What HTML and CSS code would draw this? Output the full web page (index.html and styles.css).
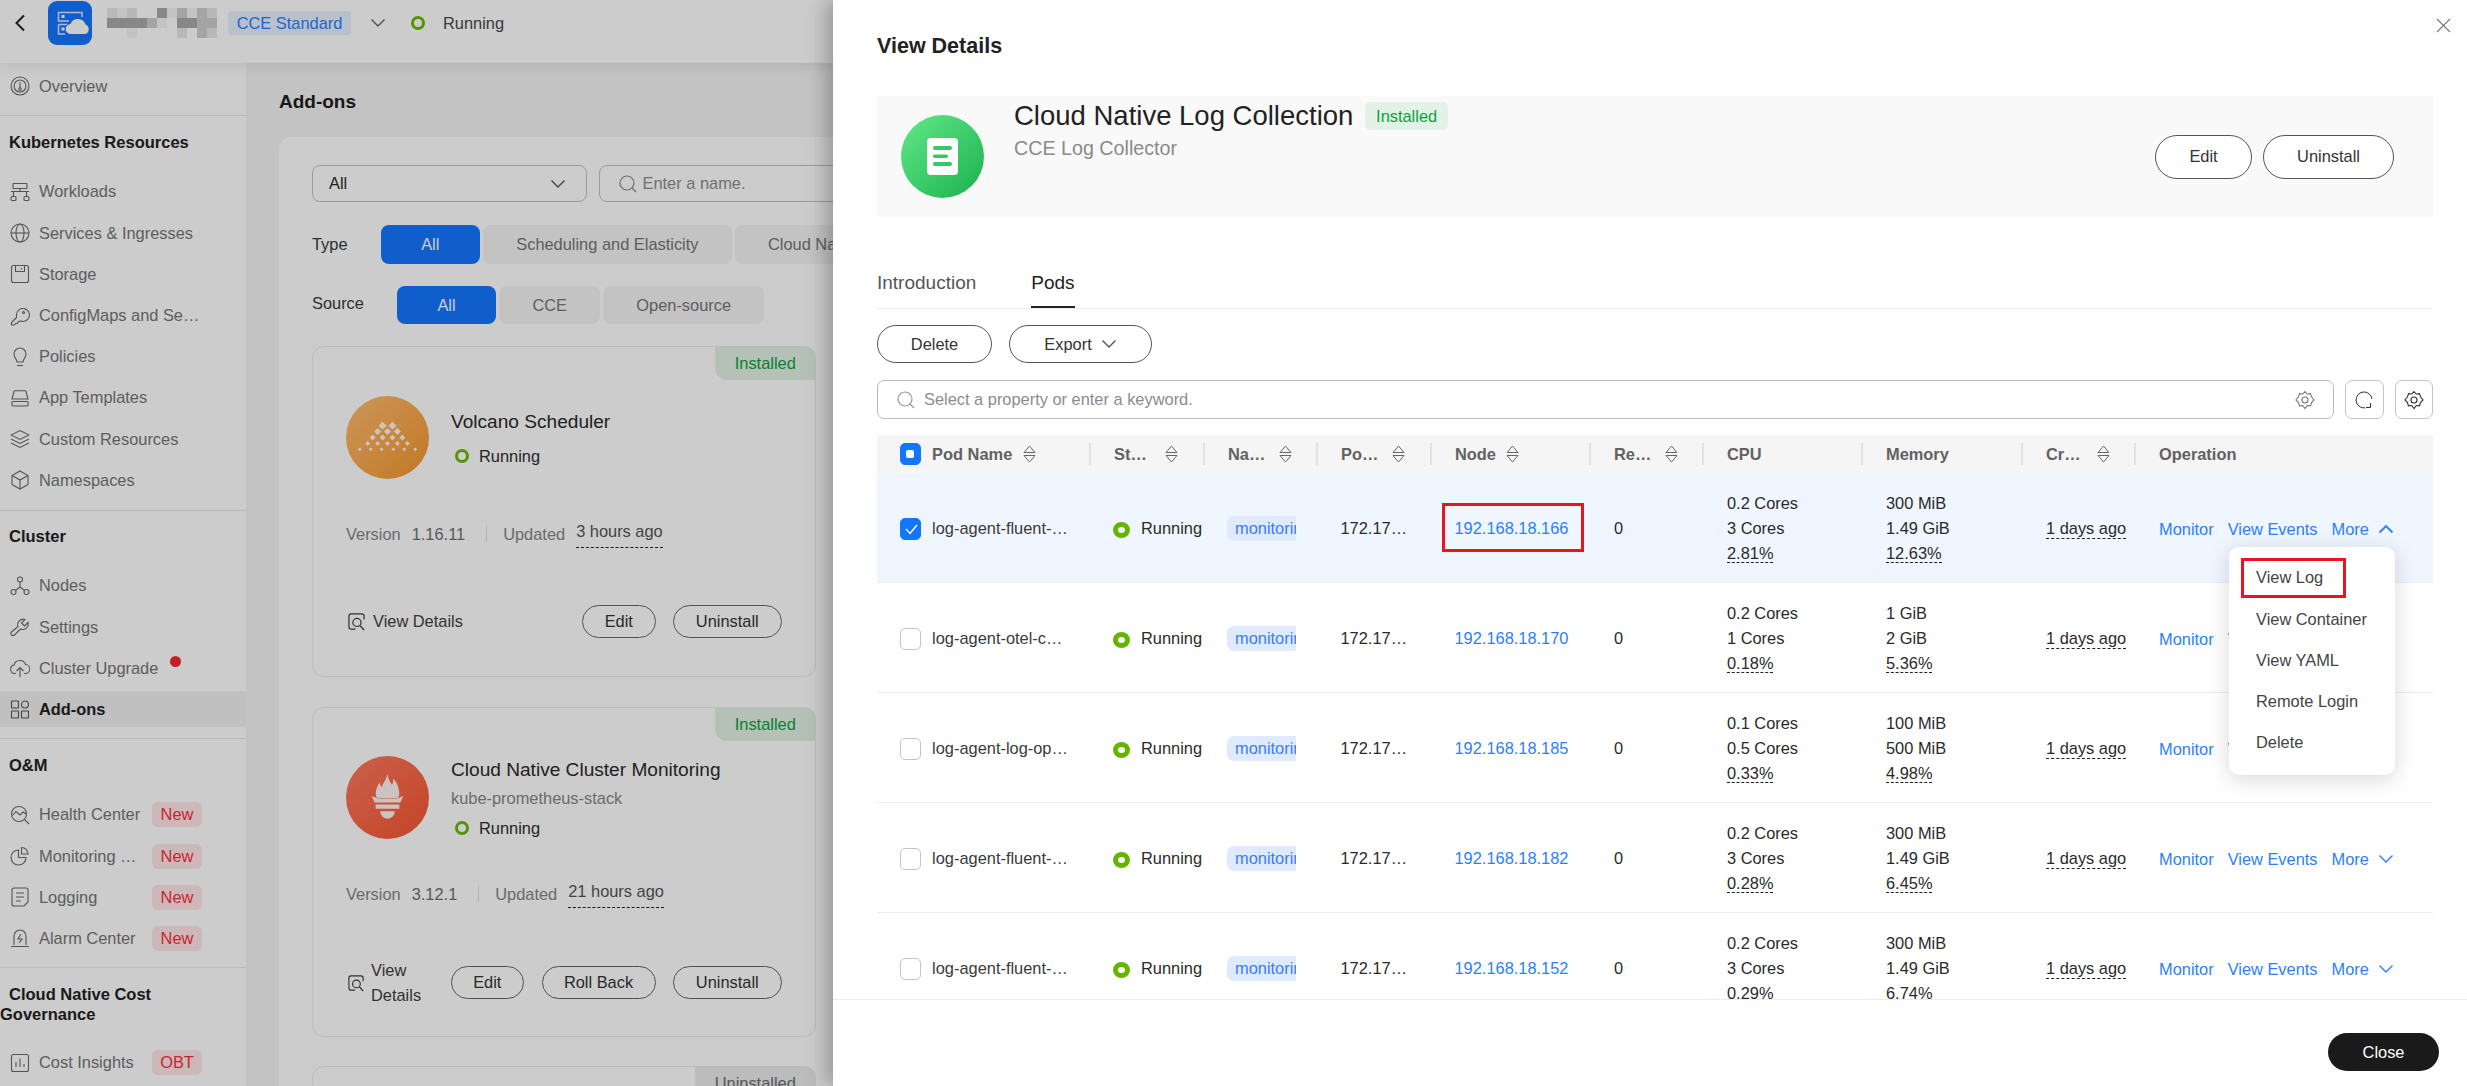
FILE: index.html
```html
<!DOCTYPE html>
<html lang="en">
<head>
<meta charset="utf-8">
<title>Add-ons</title>
<link rel="stylesheet" href="styles.css">
</head>
<body>
<svg class="defs" width="0" height="0" aria-hidden="true">
  <symbol id="i-sort" viewBox="0 0 13 18"><path d="M6.5 1 12 7.5H1ZM1 10.5H12L6.5 17Z" fill="none" stroke="#666" stroke-width="1"/></symbol>
  <symbol id="i-down" viewBox="0 0 16 10"><path d="M1.5 1.5 8 8l6.5-6.5" fill="none" stroke="currentColor" stroke-width="1.4"/></symbol>
  <symbol id="i-up" viewBox="0 0 16 10"><path d="M1.5 8.5 8 2l6.5 6.5" fill="none" stroke="currentColor" stroke-width="1.8"/></symbol>
  <symbol id="i-search" viewBox="0 0 18 18"><circle cx="8" cy="8" r="7" fill="none" stroke="currentColor" stroke-width="1.2"/><path d="m13 13 4 4" stroke="currentColor" stroke-width="1.2"/></symbol>
  <symbol id="i-gear" viewBox="0 0 20 20"><path d="M10 1.5 12.2 4l3.3-.4 1 3.2L19 9.9l-2.5 2.7-.9 3.3-3.3-.4L10 18.5l-2.3-3-3.3.4-.9-3.3L1 9.900l2.500-3.100 1-3.200 3.300.4Z" fill="none" stroke="currentColor" stroke-width="1.1"/><circle cx="10" cy="10" r="3" fill="none" stroke="currentColor" stroke-width="1.1"/></symbol>
  <symbol id="i-view" viewBox="0 0 18 20"><path d="M8 18H3.500A2.500 2.500 0 0 1 1 15.500v-11A2.500 2.500 0 0 1 3.500 2h11A2.500 2.500 0 0 1 17 4.500V8" fill="none" stroke="currentColor" stroke-width="1.3"/><circle cx="9.500" cy="11" r="4.300" fill="none" stroke="currentColor" stroke-width="1.3"/><path d="m13 14.500 4 4.500" stroke="currentColor" stroke-width="1.3"/></symbol>
</svg>

<div class="page">
  <header class="topbar">
    <svg class="back" viewBox="0 0 12 18" width="12" height="18"><path d="M10 1.500 2.500 9l7.500 7.500" fill="none" stroke="#222" stroke-width="2"/></svg>
    <div class="logo">
      <svg viewBox="0 0 44 44" width="44" height="44"><path d="M34 16v-4.500H10.500V20H21M10.500 23.500H19M10.500 23.500V33H17" fill="none" stroke="#fff" stroke-width="1.500" opacity=".85"/><rect x="13.500" y="14" width="3" height="3" fill="#fff"/><rect x="13.500" y="26.500" width="3" height="3" fill="#fff"/><path d="M23 33a5 5 0 0 1-.5-10 8 8 0 0 1 15 .5A5 5 0 0 1 37 33Z" fill="#fff"/></svg>
    </div>
    <div class="mosaic" aria-hidden="true">
      <i class="s3"></i><i class="s4"></i><i class="s3"></i><i></i><i></i><i class="s1"></i><i class="s4"></i><i class="s2"></i><i class="s4"></i><i class="s2"></i><i class="s3"></i>
      <i class="s1"></i><i class="s1"></i><i class="s1"></i><i class="s1"></i><i class="s2"></i><i class="s4"></i><i></i><i class="s1"></i><i class="s1"></i><i class="s2"></i><i class="s2"></i>
      <i></i><i></i><i class="s4"></i><i></i><i></i><i></i><i></i><i class="s3"></i><i></i><i class="s2"></i><i class="s3"></i>
    </div>
    <span class="cluster-tag">CCE Standard</span>
    <svg class="top-chev" width="16" height="10"><use href="#i-down"/></svg>
    <span class="ring ring-sm"></span>
    <span class="top-status">Running</span>
  </header>

  <div class="shell">
    <nav class="sidebar">
      <div class="group g-overview">
        <a class="item"><svg class="ico" viewBox="0 0 20 20"><circle cx="10" cy="10" r="9"/><circle cx="10" cy="10" r="6"/><path d="M10 6v6"/><circle cx="10" cy="13" r="1.300"/></svg><span>Overview</span></a>
      </div>
      <div class="group g-k8s">
        <h3 class="sect">Kubernetes Resources</h3>
        <a class="item"><svg class="ico" viewBox="0 0 20 20"><rect x="3" y="1.500" width="14" height="5" rx=".5"/><path d="M1 9.500h18M10 6.500v3M3.500 9.500v5M16.500 9.500v5"/><rect x="1" y="14.500" width="5" height="4" rx="1"/><rect x="14" y="14.500" width="5" height="4" rx="1"/></svg><span>Workloads</span></a>
        <a class="item"><svg class="ico" viewBox="0 0 20 20"><circle cx="10" cy="10" r="9"/><ellipse cx="10" cy="10" rx="4" ry="9"/><path d="M1 10h18"/></svg><span>Services &amp; Ingresses</span></a>
        <a class="item"><svg class="ico" viewBox="0 0 20 20"><rect x="1.500" y="1.500" width="17" height="17" rx="2"/><path d="M5.500 1.500v6h9v-6M11.500 4v1.500"/></svg><span>Storage</span></a>
        <a class="item"><svg class="ico" viewBox="0 0 20 20"><path d="M6.500 11.500 1.500 16.500v2.500h3l1-1.500h2l1-2 2-.5A6.500 6.500 0 1 0 6.500 8Z"/><circle cx="13.500" cy="6.500" r="1"/></svg><span>ConfigMaps and Se…</span></a>
        <a class="item"><svg class="ico" viewBox="0 0 20 20"><path d="M7 15c0-3-3-4-3-8a6 6 0 0 1 12 0c0 4-3 5-3 8Z"/><path d="M7 18.500h6"/></svg><span>Policies</span></a>
        <a class="item"><svg class="ico" viewBox="0 0 20 20"><path d="M2 11 4 3.500a1 1 0 0 1 1-.8h10a1 1 0 0 1 1 .8L18 11Z"/><rect x="2" y="13.500" width="16" height="4.500" rx="1"/></svg><span>App Templates</span></a>
        <a class="item"><svg class="ico" viewBox="0 0 20 20"><path d="m10 1.500 9 4.500-9 4.500L1 6ZM1 10l9 4.500 9-4.500M1 14l9 4.500 9-4.500"/></svg><span>Custom Resources</span></a>
        <a class="item"><svg class="ico" viewBox="0 0 20 20"><path d="m10 1 8 4.500v9L10 19l-8-4.500v-9ZM2 5.500l8 4.500 8-4.500M10 10v9"/></svg><span>Namespaces</span></a>
      </div>
      <div class="group g-cluster">
        <h3 class="sect">Cluster</h3>
        <a class="item"><svg class="ico" viewBox="0 0 20 20"><circle cx="10" cy="3.500" r="2.500"/><circle cx="3.500" cy="16" r="2.500"/><circle cx="16.500" cy="16" r="2.500"/><path d="M10 6v5l-4.500 3.500M10 11l4.500 3.500"/></svg><span>Nodes</span></a>
        <a class="item"><svg class="ico" viewBox="0 0 20 20"><path d="M18 5.500 14.500 9 11.500 6l3.500-3.500a5.500 5.500 0 0 0-7 7L1.500 15a2 2 0 0 0 3 3l6-6a5.500 5.500 0 0 0 7.500-6.500Z"/></svg><span>Settings</span></a>
        <a class="item item-dot"><svg class="ico" viewBox="0 0 20 20"><path d="M6 15.500H5A4.300 4.300 0 0 1 4 7a6 6 0 0 1 11.500-.5A4.500 4.500 0 0 1 15 15.500h-1M10 19v-9M6.500 13 10 9.500l3.500 3.500"/></svg><span>Cluster Upgrade</span><i class="red-dot"></i></a>
        <a class="item active"><svg class="ico" viewBox="0 0 20 20"><rect x="1.500" y="2" width="7" height="7" rx=".5"/><circle cx="15" cy="5.500" r="3.500"/><rect x="1.500" y="12" width="7" height="7" rx=".5"/><rect x="11.500" y="12" width="7" height="7" rx=".5"/></svg><span>Add-ons</span></a>
      </div>
      <div class="group g-om">
        <h3 class="sect">O&amp;M</h3>
        <a class="item"><svg class="ico" viewBox="0 0 20 20"><circle cx="9" cy="9" r="7.500"/><path d="m14.500 14.500 4.500 4.500M2.500 10.500 6 6.500l4 3.500 3-3 3 2"/></svg><span class="lab">Health Center</span><b class="new">New</b></a>
        <a class="item"><svg class="ico" viewBox="0 0 20 20"><path d="M8.500 4a7.500 7.500 0 1 0 7.500 7.500H8.500Z"/><path d="M11.500 1.500v6.500H18a6.500 6.500 0 0 0-6.500-6.500Z"/></svg><span class="lab">Monitoring …</span><b class="new">New</b></a>
        <a class="item"><svg class="ico" viewBox="0 0 20 20"><path d="M14 19H4a2 2 0 0 1-2-2V3a2 2 0 0 1 2-2h12a2 2 0 0 1 2 2v12ZM6 6h8M6 10h8M6 14h5"/></svg><span class="lab">Logging</span><b class="new">New</b></a>
        <a class="item"><svg class="ico" viewBox="0 0 20 20"><path d="M4 17V8a6 6 0 0 1 12 0v9M1 18.500h18M11 6 8 11h4l-3 4"/></svg><span class="lab">Alarm Center</span><b class="new">New</b></a>
      </div>
      <div class="group g-cost">
        <h3 class="sect sect-wrap">Cloud Native Cost Governance</h3>
        <a class="item"><svg class="ico" viewBox="0 0 20 20"><rect x="1.500" y="1.500" width="17" height="17" rx="2"/><path d="M6 14V9M10 14V5.500M14 14v-3"/></svg><span class="lab">Cost Insights</span><b class="new">OBT</b></a>
      </div>
    </nav>

    <main class="main">
      <h1 class="title">Add-ons</h1>
      <section class="panel">
        <div class="filters">
          <div class="select"><span>All</span><svg width="16" height="10"><use href="#i-down"/></svg></div>
          <div class="namebox"><svg width="18" height="18"><use href="#i-search"/></svg><span>Enter a name.</span></div>
        </div>
        <div class="pillrow">
          <span class="pill-label w-type">Type</span>
          <span class="pill on p-all">All</span>
          <span class="pill p-sched">Scheduling and Elasticity</span>
          <span class="pill p-cloud">Cloud Native Observability</span>
        </div>
        <div class="pillrow row-source">
          <span class="pill-label w-source">Source</span>
          <span class="pill on p-all">All</span>
          <span class="pill p-cce">CCE</span>
          <span class="pill p-open">Open-source</span>
        </div>

        <article class="addon">
          <span class="corner">Installed</span>
          <div class="addon-head">
            <div class="round volcano">
              <svg viewBox="-42 -42 84 84" width="83" height="83"><path fill="#fff" opacity=".9" d="M-5-16l4 4-4 4-4-4zM5-16l4 4-4 4-4-4zM-10-9.500l3.500 3.500-3.500 3.500-3.500-3.500zM0-9.500l3.500 3.500-3.500 3.500-3.500-3.500zM10-9.500l3.500 3.500-3.500 3.500-3.500-3.500zM-15-3l3 3-3 3-3-3zM-5-3l3 3-3 3-3-3zM5-3l3 3-3 3-3-3zM15-3l3 3-3 3-3-3zM-20 3.500l2.500 2.500-2.500 2.500-2.500-2.500zM-10 3.500l2.500 2.500-2.500 2.500-2.500-2.500zM0 3.500l2.500 2.500-2.500 2.500-2.500-2.500zM10 3.500l2.500 2.500-2.500 2.500-2.500-2.500zM20 3.500l2.500 2.500-2.500 2.500-2.500-2.500zM-28 10l2 2-2 2-2-2zM-17 10l2 2-2 2-2-2zM-6 10l2 2-2 2-2-2zM6 10l2 2-2 2-2-2zM17 10l2 2-2 2-2-2zM28 10l2 2-2 2-2-2z"/></svg>
            </div>
            <div class="addon-info">
              <div class="addon-name">Volcano Scheduler</div>
              <div class="addon-status st-gap"><span class="ring ring-sm"></span>Running</div>
            </div>
          </div>
          <div class="meta"><span class="k">Version</span><span class="v">1.16.11</span><i class="vsep"></i><span class="k">Updated</span><span class="time">3 hours ago</span></div>
          <div class="actions">
            <a class="details"><svg width="17" height="19"><use href="#i-view"/></svg>View Details</a>
            <div class="btns"><button class="btn b-edit">Edit</button><button class="btn b-uninstall">Uninstall</button></div>
          </div>
        </article>

        <article class="addon addon-two">
          <span class="corner">Installed</span>
          <div class="addon-head">
            <div class="round flame">
              <svg viewBox="-42 -42 84 84" width="83" height="83"><path fill="#fff" opacity=".92" d="M0-24c1 6 2 7 4.500 11 1.500-2 1.500-4 1-6.500 4 4 5.500 8 6 12.500 1 4 0 6-1 7.500H-10.500c-1-1.500-2-3.500-1-7.500.5-3 1.500-5.500 4-8.500 0 2.500.5 4 1.500 5 1.500-4 5-8 6-13.500ZM-16-1.500-9.500 1h19L16-1.500 13 5H-13ZM-12 7H12V11.500H-12ZM-7.500 14H7.500C7 19 3.500 21.500 0 21.500S-7 19-7.500 14Z"/></svg>
            </div>
            <div class="addon-info">
              <div class="addon-name">Cloud Native Cluster Monitoring</div>
              <div class="addon-sub">kube-prometheus-stack</div>
              <div class="addon-status"><span class="ring ring-sm"></span>Running</div>
            </div>
          </div>
          <div class="meta"><span class="k">Version</span><span class="v">3.12.1</span><i class="vsep"></i><span class="k">Updated</span><span class="time">21 hours ago</span></div>
          <div class="actions">
            <a class="details details-wrap"><svg width="16" height="18"><use href="#i-view"/></svg><span>View<br>Details</span></a>
            <div class="btns"><button class="btn b-edit">Edit</button><button class="btn b-roll">Roll Back</button><button class="btn b-uninstall">Uninstall</button></div>
          </div>
        </article>

        <article class="addon addon-three">
          <span class="corner corner-grey">Uninstalled</span>
        </article>
      </section>
    </main>
  </div>

  <div class="mask"></div>

  <aside class="drawer">
    <svg class="close-x" viewBox="0 0 15 15" width="15" height="15"><path d="M1 1l13 13M14 1 1 14" stroke="#777" stroke-width="1.100"/></svg>
    <div class="drawer-body">
      <h2 class="drawer-title">View Details</h2>
      <div class="hero">
        <div class="round logcol">
          <svg viewBox="0 0 83 83" width="83" height="83"><rect x="26" y="23" width="31" height="37" rx="4" fill="#fff"/><g fill="#34c964"><rect x="32" y="31" width="19" height="4" rx="2"/><rect x="32" y="39.500" width="15" height="3.500" rx="1.700"/><rect x="32" y="47" width="19" height="4" rx="2"/></g></svg>
        </div>
        <div class="hero-text">
          <div class="hero-name"><span>Cloud Native Log Collection</span><em class="badge">Installed</em></div>
          <div class="hero-sub">CCE Log Collector</div>
        </div>
        <div class="hero-btns"><button class="hbtn h-edit">Edit</button><button class="hbtn h-un">Uninstall</button></div>
      </div>

      <div class="tabs"><span class="tab">Introduction</span><span class="tab tab-on">Pods</span></div>

      <div class="toolbar">
        <button class="tbtn t-del">Delete</button>
        <button class="tbtn t-exp">Export<svg width="16" height="10"><use href="#i-down"/></svg></button>
      </div>

      <div class="searchrow">
        <div class="searchbox">
          <svg class="s-ico" width="18" height="18"><use href="#i-search"/></svg>
          <span class="ph">Select a property or enter a keyword.</span>
          <svg class="s-gear" width="20" height="20"><use href="#i-gear"/></svg>
        </div>
        <button class="sqbtn"><svg viewBox="0 0 20 20" width="20" height="20"><path d="M18 9A8 8 0 1 0 11 17.900" fill="none" stroke="#333" stroke-width="1"/><path d="M16.500 13v4.500H12" fill="none" stroke="#333" stroke-width="1"/></svg></button>
        <button class="sqbtn"><svg width="20" height="20" class="sq-gear"><use href="#i-gear"/></svg></button>
      </div>

      <div class="table">
        <div class="tr thead">
          <div class="th th-first"><span class="cb cb-part"></span><span class="lab lab-wide">Pod Name</span><svg width="13" height="18"><use href="#i-sort"/></svg></div>
          <div class="th"><span class="lab">St…</span><svg width="13" height="18"><use href="#i-sort"/></svg></div>
          <div class="th"><span class="lab">Na…</span><svg width="13" height="18"><use href="#i-sort"/></svg></div>
          <div class="th"><span class="lab">Po…</span><svg width="13" height="18"><use href="#i-sort"/></svg></div>
          <div class="th"><span class="lab">Node</span><svg width="13" height="18"><use href="#i-sort"/></svg></div>
          <div class="th"><span class="lab">Re…</span><svg width="13" height="18"><use href="#i-sort"/></svg></div>
          <div class="th"><span>CPU</span></div>
          <div class="th"><span>Memory</span></div>
          <div class="th"><span class="lab">Cr…</span><svg width="13" height="18"><use href="#i-sort"/></svg></div>
          <div class="th th-last"><span>Operation</span></div>
        </div>

        <div class="tr row row-sel">
          <div class="td td-first"><span class="cb cb-on"><svg viewBox="0 0 22 22" width="22" height="22"><path d="m6 11 4 4.500 7-8.500" fill="none" stroke="#fff" stroke-width="1.400"/></svg></span>log-agent-fluent-…</div>
          <div class="td td-st"><span class="ring"></span>Running</div>
          <div class="td td-ns"><span class="ns">monitoring</span></div>
          <div class="td td-ip">172.17…</div>
          <div class="td td-ip"><a class="lnk">192.168.18.166</a></div>
          <div class="td">0</div>
          <div class="td stack"><span>0.2 Cores</span><span>3 Cores</span><span><u>2.81%</u></span></div>
          <div class="td stack"><span>300 MiB</span><span>1.49 GiB</span><span><u>12.63%</u></span></div>
          <div class="td"><u>1 days ago</u></div>
          <div class="td ops"><a class="lnk">Monitor</a><a class="lnk">View Events</a><a class="lnk">More</a><svg class="chev" width="16" height="10"><use href="#i-up"/></svg></div>
        </div>

        <div class="tr row">
          <div class="td td-first"><span class="cb"></span>log-agent-otel-c…</div>
          <div class="td td-st"><span class="ring"></span>Running</div>
          <div class="td td-ns"><span class="ns">monitoring</span></div>
          <div class="td td-ip">172.17…</div>
          <div class="td td-ip"><a class="lnk">192.168.18.170</a></div>
          <div class="td">0</div>
          <div class="td stack"><span>0.2 Cores</span><span>1 Cores</span><span><u>0.18%</u></span></div>
          <div class="td stack"><span>1 GiB</span><span>2 GiB</span><span><u>5.36%</u></span></div>
          <div class="td"><u>1 days ago</u></div>
          <div class="td ops"><a class="lnk">Monitor</a><a class="lnk">View Events</a><a class="lnk">More</a><svg class="chev" width="16" height="10"><use href="#i-down"/></svg></div>
        </div>

        <div class="tr row">
          <div class="td td-first"><span class="cb"></span>log-agent-log-op…</div>
          <div class="td td-st"><span class="ring"></span>Running</div>
          <div class="td td-ns"><span class="ns">monitoring</span></div>
          <div class="td td-ip">172.17…</div>
          <div class="td td-ip"><a class="lnk">192.168.18.185</a></div>
          <div class="td">0</div>
          <div class="td stack"><span>0.1 Cores</span><span>0.5 Cores</span><span><u>0.33%</u></span></div>
          <div class="td stack"><span>100 MiB</span><span>500 MiB</span><span><u>4.98%</u></span></div>
          <div class="td"><u>1 days ago</u></div>
          <div class="td ops"><a class="lnk">Monitor</a><a class="lnk">View Events</a><a class="lnk">More</a><svg class="chev" width="16" height="10"><use href="#i-down"/></svg></div>
        </div>

        <div class="tr row">
          <div class="td td-first"><span class="cb"></span>log-agent-fluent-…</div>
          <div class="td td-st"><span class="ring"></span>Running</div>
          <div class="td td-ns"><span class="ns">monitoring</span></div>
          <div class="td td-ip">172.17…</div>
          <div class="td td-ip"><a class="lnk">192.168.18.182</a></div>
          <div class="td">0</div>
          <div class="td stack"><span>0.2 Cores</span><span>3 Cores</span><span><u>0.28%</u></span></div>
          <div class="td stack"><span>300 MiB</span><span>1.49 GiB</span><span><u>6.45%</u></span></div>
          <div class="td"><u>1 days ago</u></div>
          <div class="td ops"><a class="lnk">Monitor</a><a class="lnk">View Events</a><a class="lnk">More</a><svg class="chev" width="16" height="10"><use href="#i-down"/></svg></div>
        </div>

        <div class="tr row">
          <div class="td td-first"><span class="cb"></span>log-agent-fluent-…</div>
          <div class="td td-st"><span class="ring"></span>Running</div>
          <div class="td td-ns"><span class="ns">monitoring</span></div>
          <div class="td td-ip">172.17…</div>
          <div class="td td-ip"><a class="lnk">192.168.18.152</a></div>
          <div class="td">0</div>
          <div class="td stack"><span>0.2 Cores</span><span>3 Cores</span><span><u>0.29%</u></span></div>
          <div class="td stack"><span>300 MiB</span><span>1.49 GiB</span><span><u>6.74%</u></span></div>
          <div class="td"><u>1 days ago</u></div>
          <div class="td ops"><a class="lnk">Monitor</a><a class="lnk">View Events</a><a class="lnk">More</a><svg class="chev" width="16" height="10"><use href="#i-down"/></svg></div>
        </div>
      </div>
    </div>
    <footer class="drawer-foot"><button class="close-btn">Close</button></footer>

    <div class="mark mark-node"></div>
    <div class="menu">
      <span class="mark mark-log"></span>
      <a>View Log</a><a>View Container</a><a>View YAML</a><a>Remote Login</a><a>Delete</a>
    </div>
  </aside>
</div>
</body>
</html>
```
FILE: styles.css
```css
* { box-sizing: border-box; }
html, body { margin: 0; padding: 0; width: 2467px; height: 1086px; overflow: hidden; }
body { font-family: "Liberation Sans", Arial, sans-serif; font-size: 16.4px; color: #222; background: #fff; }
.defs { position: absolute; }
a { text-decoration: none; }
button { font: inherit; background: #fff; cursor: pointer; padding: 0; }
em { font-style: normal; }

.page { position: relative; width: 2467px; height: 1086px; overflow: hidden; display: flex; flex-direction: column; }

/* Top bar */
.topbar { position: relative; z-index: 2; height: 63px; flex: none; background: #fff; box-shadow: 0 2px 14px rgba(0,0,0,.1); display: flex; align-items: center; padding: 0 0 17px 14px; }
.back { flex: none; }
.logo { width: 44px; height: 44px; margin-left: 22px; border-radius: 9px; background: #1376ff; flex: none; }
.logo svg { display: block; }
.mosaic { display: grid; grid-template-columns: repeat(11, 10px); grid-template-rows: repeat(3, 10px); margin-left: 15px; flex: none; }
.mosaic .s1 { background: #aaa; }
.mosaic .s2 { background: #cdcdcd; }
.mosaic .s3 { background: #e6e6e6; }
.mosaic .s4 { background: #f4f4f4; }
.cluster-tag { margin-left: 11px; width: 123px; height: 24px; line-height: 24px; text-align: center; border-radius: 4px; background: #e7f0ff; color: #2780ff; white-space: nowrap; }
.top-chev { margin-left: 19px; color: #666; flex: none; }
.ring { display: inline-block; width: 17px; height: 16px; border: 5px solid #66b300; border-radius: 50%; flex: none; }
.ring-sm { width: 14px; height: 14px; border-width: 3.5px; border-color: #6cb800; }
.topbar .ring-sm { margin-left: 25px; }
.top-status { margin-left: 18px; color: #4a4a4a; }

/* Shell */
.shell { flex: 1; display: flex; min-height: 0; }

/* Sidebar */
.sidebar { width: 246px; flex: none; background: #fff; overflow: hidden; position: relative; z-index: 1; }
.group { border-bottom: 1px solid #e9e9e9; }
.g-overview { padding-top: 5px; padding-bottom: 5.8px; }
.g-k8s { padding-top: 16px; padding-bottom: 6.4px; }
.g-k8s .sect { margin-bottom: 22px; }
.g-cluster { padding-top: 15px; padding-bottom: 5.2px; }
.g-cluster .sect { margin-bottom: 22px; }
.g-om { padding-top: 16px; padding-bottom: 5.2px; }
.g-om .sect { margin-bottom: 22px; }
.g-cost { padding-top: 16px; border-bottom: 0; }
.g-cost .sect { margin-bottom: 21px; }
.sect { margin: 0; padding-left: 9px; font-size: 16.5px; line-height: 20px; font-weight: 700; color: #222; }
.sect-wrap { padding-left: 0; text-indent: 9px; width: 190px; }
.item { position: relative; height: 36px; margin-bottom: 5.2px; padding-left: 10px; display: flex; align-items: center; color: #757575; white-space: nowrap; }
.ico { width: 20px; height: 20px; flex: none; margin-right: 9px; fill: none; stroke: #6a6a6a; stroke-width: 1.1; }
.item.active { background: #f0f0f0; color: #222; font-weight: 700; }
.item.active .ico { stroke: #555; }
.lab { display: block; }
.item .lab { width: 113px; flex: none; }
.new { width: 50px; height: 25px; line-height: 25px; text-align: center; font-weight: 400; color: #fb2f3c; background: #ffe5e8; border-radius: 6px; flex: none; }
.red-dot { position: absolute; left: 170px; top: 6px; width: 11px; height: 11px; border-radius: 50%; background: #fb2730; }

/* Main */
.main { flex: 1; min-width: 0; background: #f4f4f4; padding: 29px 0 0 33px; overflow: hidden; }
.title { margin: 0 0 25px; font-size: 19px; line-height: 20px; font-weight: 700; color: #1d1d1d; }
.panel { width: 800px; height: 1100px; background: #fff; border-radius: 12px; padding: 28px 0 0 33px; }
.filters { display: flex; gap: 12px; height: 37px; }
.select { width: 274.5px; border: 1px solid #c4c4c4; border-radius: 8px; display: flex; align-items: center; justify-content: space-between; padding: 0 20px 0 16px; color: #2a2a2a; }
.select svg { color: #555; }
.namebox { width: 400px; border: 1px solid #c4c4c4; border-radius: 8px; display: flex; align-items: center; gap: 6px; padding-left: 19px; color: #8c8c8c; }
.pillrow { display: flex; align-items: center; gap: 3.4px; height: 38.5px; margin-top: 23px; }
.row-source { height: 38px; margin-top: 22.5px; }
.pill-label { color: #3a3a3a; flex: none; }
.w-type { width: 65.4px; }
.w-source { width: 81.6px; padding-bottom: 3px; }
.pill { height: 100%; display: flex; align-items: center; justify-content: center; border-radius: 8px; background: #f4f4f4; color: #757575; white-space: nowrap; flex: none; }
.pill.on { background: #1376ff; color: #fff; }
.p-all { width: 99px; }
.p-sched { width: 248.4px; }
.p-cloud { width: 300px; justify-content: flex-start; padding-left: 33px; }
.p-cce { width: 100.7px; }
.p-open { width: 160.5px; }

.addon { position: relative; width: 503.5px; height: 331px; margin-top: 22px; margin-bottom: 30px; border: 1px solid #ebebeb; border-radius: 12px; padding: 49px 33px 0; }
.addon-two { height: 330px; margin-top: 0; margin-bottom: 29px; padding-top: 46.5px; }
.addon-three { margin-top: 0; }
.corner { position: absolute; top: -1px; right: -1px; width: 100.5px; height: 34px; line-height: 34px; text-align: center; background: #e3f2e5; color: #0ca040; border-radius: 0 12px 0 12px; }
.corner-grey { width: 120.5px; background: #ececec; color: #6b6b6b; }
.addon-head { display: flex; align-items: center; gap: 22px; }
.addon-info { padding-top: 2px; }
.addon-two .addon-info { padding-top: 3px; }
.round { width: 83px; height: 83px; border-radius: 50%; flex: none; }
.round svg { display: block; }
.volcano { background: linear-gradient(135deg, #ffbd72, #f5962c); }
.flame { background: linear-gradient(135deg, #ff7a5f, #f45530); }
.logcol { background: linear-gradient(135deg, #63e88a, #1ab24d); }
.addon-name { font-size: 19.1px; line-height: 24px; color: #2a2a2a; white-space: nowrap; }
.addon-sub { margin-top: 4px; line-height: 24px; color: #868686; white-space: nowrap; }
.addon-status { margin-top: 6px; line-height: 24px; color: #2e2e2e; display: flex; align-items: center; gap: 10.5px; padding-left: 3.5px; }
.st-gap { margin-top: 10px; }
.meta { margin-top: 45px; height: 20px; line-height: 20px; display: flex; align-items: center; white-space: nowrap; color: #858585; }
.addon-two .meta { margin-top: 44.5px; }
.meta .k { margin-right: 11px; }
.meta .v { color: #6f6f6f; }
.vsep { width: 1px; height: 16px; background: #dedede; margin: 0 16px 0 21px; }
.time { color: #555; border-bottom: 1px dashed #222; padding-bottom: 6px; }
.actions { margin-top: 61px; height: 33px; display: flex; align-items: center; }
.addon-two .actions { margin-top: 62px; }
.details { display: flex; align-items: center; gap: 8px; padding-left: 2px; color: #404040; white-space: nowrap; }
.details svg { color: #3d3d3d; flex: none; }
.details-wrap { line-height: 25px; gap: 7px; }
.btns { margin-left: auto; display: flex; gap: 17.5px; }
.btn { height: 33px; border: 1px solid #666; border-radius: 17px; color: #333; }
.b-edit { width: 73.5px; }
.b-uninstall { width: 108.5px; }
.b-roll { width: 114px; }

/* Mask + drawer overlay */
.mask { position: absolute; inset: 0; background: rgba(0,0,0,.2); z-index: 10; }
.drawer { position: absolute; z-index: 11; left: 833px; top: 0; width: 1634px; height: 1086px; background: #fff; box-shadow: -6px 0 20px rgba(0,0,0,.28); display: flex; flex-direction: column; }
.close-x { position: absolute; top: 18px; right: 16px; }
.drawer-body { flex: 1; min-height: 0; overflow: hidden; padding: 34px 34px 0 44px; }
.drawer-title { margin: 0 0 38px; font-size: 21.5px; line-height: 24px; font-weight: 700; color: #222; }
.hero { height: 121px; background: #f9f9f9; display: flex; align-items: center; padding: 0 39px 0 24px; }
.hero-text { align-self: flex-start; margin-left: 30px; padding-top: 4px; }
.hero-name { display: flex; align-items: center; height: 32px; font-size: 27.5px; color: #222; white-space: nowrap; }
.badge { margin-left: 11.5px; width: 83.5px; height: 28px; line-height: 28px; text-align: center; font-size: 16.4px; background: #e3f2e6; color: #0ca040; border-radius: 5px; }
.hero-sub { margin-top: 4px; line-height: 24px; font-size: 19.7px; color: #8a8a8a; white-space: nowrap; }
.hero-btns { margin-left: auto; display: flex; gap: 11px; }
.hbtn { height: 44px; border: 1px solid #555; border-radius: 22px; color: #333; }
.h-edit { width: 97px; }
.h-un { width: 131px; }

.tabs { margin-top: 54px; display: flex; gap: 55px; border-bottom: 1px solid #eee; }
.tab { font-size: 19px; line-height: 24px; padding-bottom: 11px; color: #555; border-bottom: 2px solid transparent; margin-bottom: 0; }
.tab-on { color: #222; border-bottom-color: #222; }
.toolbar { margin-top: 16px; display: flex; gap: 17px; height: 38px; }
.tbtn { height: 38px; border: 1px solid #555; border-radius: 19px; color: #333; display: flex; align-items: center; justify-content: center; }
.t-del { width: 115px; }
.t-exp { width: 143px; gap: 9px; }
.t-exp svg { color: #555; }
.searchrow { margin-top: 17px; display: flex; gap: 11px; height: 39px; }
.searchbox { flex: 1; border: 1px solid #bbb; border-radius: 7px; display: flex; align-items: center; padding: 0 18px 0 19px; }
.s-ico { color: #9a9a9a; flex: none; }
.ph { margin-left: 9px; color: #8c8c8c; }
.s-gear { margin-left: auto; color: #777; }
.sqbtn { width: 38.5px; border: 1px solid #c4c4c4; border-radius: 7px; display: flex; align-items: center; justify-content: center; }
.sq-gear { color: #333; }

.table { margin-top: 16px; }
.tr { display: grid; grid-template-columns: 214px 114px 113px 114px 159px 113px 159px 160px 113px 297px; }
.thead { height: 38px; background: #f5f5f5; align-items: center; }
.th { height: 22px; padding-left: 23px; display: flex; align-items: center; border-right: 2px solid #e2e2e2; font-weight: 700; color: #626262; white-space: nowrap; }
.th-first { padding-left: 22.6px; }
.th-last { border-right: 0; }
.th .lab { width: 51px; flex: none; }
.th .lab-wide { width: 91px; margin-left: 11px; }
.cb { display: inline-block; position: relative; width: 21.5px; height: 22px; border: 1px solid #c4c4c4; border-radius: 5px; background: #fff; flex: none; }
.cb-part { background: #1376ff; border-color: #1376ff; }
.cb-part::after { content: ""; position: absolute; left: 5.75px; top: 6px; width: 8px; height: 8px; border-radius: 2px; background: #fff; }
.cb-on { background: #1376ff; border-color: #1376ff; }
.cb-on svg { position: absolute; left: -1px; top: -1px; }
.row { height: 110px; border-bottom: 1px solid #ececec; }
.row-sel { background: #eff6ff; }
.td { padding-left: 23px; padding-top: 2px; display: flex; align-items: center; color: #2a2a2a; white-space: nowrap; min-width: 0; overflow: hidden; }
.td u { text-decoration: none; border-bottom: 1px dashed #222; }
.td-first { padding-left: 22.6px; gap: 11px; color: #3a3a3a; }
.td-st { padding-left: 22px; gap: 11px; }
.td-st .ring { margin-top: 2px; }
.td-ns { padding-left: 22px; }
.td-ip { padding-left: 22.5px; }
.ns { display: block; width: 69px; height: 25px; line-height: 25px; padding-left: 8px; overflow: hidden; border-radius: 7px 0 0 7px; background: #dfeaff; color: #3a7bff; }
.lnk { color: #2b7fff; }
.stack { flex-direction: column; align-items: flex-start; justify-content: center; line-height: 25px; }
.ops { gap: 14px; padding-top: 3px; }
.ops .chev { margin-left: -5px; color: #2b7fff; flex: none; }
.drawer-foot { height: 87px; flex: none; background: #fff; border-top: 1px solid #ececec; display: flex; justify-content: flex-end; align-items: flex-start; padding: 33px 28px 0 0; position: relative; z-index: 1; }
.close-btn { width: 111px; height: 38px; border: 0; border-radius: 19px; background: #1a1a1a; color: #fff; }

.mark { position: absolute; border: 3px solid #e8141f; }
.mark-node { left: 609px; top: 503px; width: 142px; height: 49px; }
.menu { position: absolute; left: 1396px; top: 547px; width: 166px; height: 228px; background: #fff; border-radius: 10px; box-shadow: 0 4px 22px rgba(0,0,0,.16); padding: 10.4px 0 0 27px; z-index: 2; }
.menu a { display: block; height: 41.2px; line-height: 41.2px; color: #444; white-space: nowrap; }
.mark-log { left: 12px; top: 11px; width: 105px; height: 40px; }
```
